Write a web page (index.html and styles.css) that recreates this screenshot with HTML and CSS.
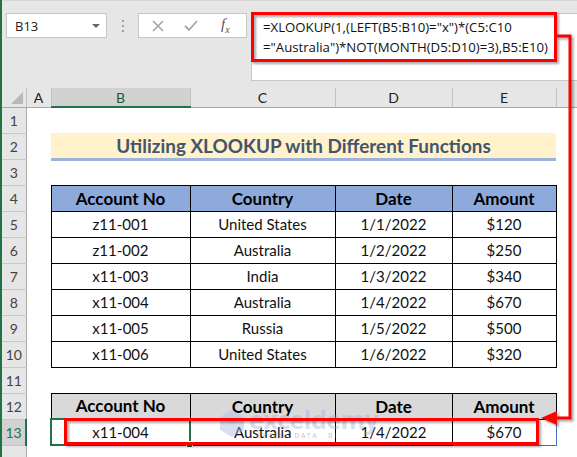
FILE: index.html
```html
<!DOCTYPE html>
<html lang="en">
<head>
    <meta charset="UTF-8">
    <title>Utilizing XLOOKUP with Different Functions</title>
    <link rel="stylesheet" href="styles.css">
</head>
<body>
    <div class="app">
        <div class="formula-bar">
            <div class="name-box">
                <span>B13</span>
                <span class="caret"></span>
            </div>
            <div class="grip"><i></i><i></i><i></i></div>
            <div class="fx-buttons">
                <svg class="btn-cancel" width="14" height="14" viewBox="0 0 14 14"><path d="M2 2 L12 12 M12 2 L2 12" stroke="#a6a6a6" stroke-width="1.6" fill="none"/></svg>
                <svg class="btn-enter" width="16" height="14" viewBox="0 0 16 14"><path d="M2 7 L6 11 L14 2" stroke="#a6a6a6" stroke-width="1.8" fill="none"/></svg>
                <span class="fx">f<sub>x</sub></span>
            </div>
            <div class="formula-input">
                <div class="formula-text">=XLOOKUP(1,(LEFT(B5:B10)="x")*(C5:C10<br>="Australia")*NOT(MONTH(D5:D10)=3),B5:E10)</div>
            </div>
        </div>

        <table class="sheet">
            <colgroup>
                <col class="w-row">
                <col class="w-a">
                <col class="w-b">
                <col class="w-c">
                <col class="w-d">
                <col class="w-e">
                <col>
            </colgroup>
            <tr class="col-heads">
                <th class="corner"><span class="corner-tri"></span></th>
                <th>A</th>
                <th class="active">B</th>
                <th>C</th>
                <th>D</th>
                <th>E</th>
                <th class="last"></th>
            </tr>
            <tr><td class="rh">1</td><td></td><td></td><td></td><td></td><td></td><td></td></tr>
            <tr>
                <td class="rh">2</td><td></td>
                <td class="title" colspan="4">Utilizing XLOOKUP with Different Functions</td>
                <td></td>
            </tr>
            <tr><td class="rh">3</td><td></td><td></td><td></td><td></td><td></td><td></td></tr>
            <tr>
                <td class="rh">4</td><td></td>
                <td class="head blue">Account No</td>
                <td class="head blue">Country</td>
                <td class="head blue">Date</td>
                <td class="head blue">Amount</td>
                <td></td>
            </tr>
            <tr><td class="rh">5</td><td></td><td class="cell">z11-001</td><td class="cell">United States</td><td class="cell">1/1/2022</td><td class="cell">$120</td><td></td></tr>
            <tr><td class="rh">6</td><td></td><td class="cell">z11-002</td><td class="cell">Australia</td><td class="cell">1/2/2022</td><td class="cell">$250</td><td></td></tr>
            <tr><td class="rh">7</td><td></td><td class="cell">x11-003</td><td class="cell">India</td><td class="cell">1/3/2022</td><td class="cell">$340</td><td></td></tr>
            <tr><td class="rh">8</td><td></td><td class="cell">x11-004</td><td class="cell">Australia</td><td class="cell">1/4/2022</td><td class="cell">$670</td><td></td></tr>
            <tr><td class="rh">9</td><td></td><td class="cell">x11-005</td><td class="cell">Russia</td><td class="cell">1/5/2022</td><td class="cell">$500</td><td></td></tr>
            <tr><td class="rh">10</td><td></td><td class="cell">x11-006</td><td class="cell">United States</td><td class="cell">1/6/2022</td><td class="cell">$320</td><td></td></tr>
            <tr><td class="rh">11</td><td></td><td></td><td></td><td></td><td></td><td></td></tr>
            <tr>
                <td class="rh">12</td><td></td>
                <td class="head gray">Account No</td>
                <td class="head gray">Country</td>
                <td class="head gray">Date</td>
                <td class="head gray">Amount</td>
                <td></td>
            </tr>
            <tr>
                <td class="rh active">13</td><td></td>
                <td class="cell selected">x11-004<span class="fill-handle"></span></td>
                <td class="cell">Australia</td>
                <td class="cell">1/4/2022</td>
                <td class="cell result-end">$670</td>
                <td></td>
            </tr>
            <tr><td class="rh"></td><td></td><td></td><td></td><td></td><td></td><td></td></tr>
        </table>

        <div class="watermark">
            <svg width="30" height="30" viewBox="0 0 30 30">
                <path d="M15 2 L27 9 L27 22 L15 29 L3 22 L3 9 Z" fill="#a9b8df" opacity="0.45"/>
                <path d="M15 2 L27 9 L15 16 L3 9 Z" fill="#c5d0ec" opacity="0.5"/>
            </svg>
            <div class="wm-text">
                <span class="wm-name">exceldemy</span>
                <span class="wm-sub">EXCEL · DATA · BI</span>
            </div>
        </div>

        <svg class="callout" width="577" height="457" viewBox="0 0 577 457">
            <g fill="none" stroke="#ff0000" stroke-width="3">
                <rect x="252.5" y="13.5" width="303" height="47"/>
                <path d="M557 36 H570 V418 H554"/>
                <rect x="65.5" y="419.5" width="472" height="24"/>
            </g>
            <polygon points="541,418 557,411 557,425" fill="#ff0000"/>
        </svg>
    </div>
</body>
</html>
```

FILE: styles.css
```css
body {
    margin: 0;
    padding: 0;
    background-color: #ffffff;
    font-family: Lato, "Liberation Sans", sans-serif;
}

.app {
    position: relative;
    width: 577px;
    height: 457px;
    overflow: hidden;
    border-left: 2px solid #217346;
    box-sizing: border-box;
}

/* formula bar */

.formula-bar {
    display: flex;
    align-items: flex-start;
    height: 88px;
    padding-top: 12px;
    box-sizing: border-box;
    background-color: #e6e6e6;
    border-top: 1px solid #d6d6d6;
}

.name-box {
    display: flex;
    align-items: center;
    justify-content: space-between;
    width: 101px;
    height: 25px;
    margin-left: 4px;
    padding: 0 6px 0 8px;
    box-sizing: border-box;
    background-color: #ffffff;
    border: 1px solid #c6c6c6;
    font-family: "Open Sans", sans-serif;
    font-size: 13px;
    color: #222;
}

.caret {
    width: 0;
    height: 0;
    border-left: 4px solid transparent;
    border-right: 4px solid transparent;
    border-top: 4px solid #666;
}

.grip {
    display: flex;
    flex-direction: column;
    gap: 3px;
    width: 31px;
    padding-top: 7px;
    align-items: center;
}

.grip i {
    width: 2px;
    height: 2px;
    background-color: #a0a0a0;
}

.fx-buttons {
    display: flex;
    align-items: center;
    width: 109px;
    height: 25px;
    padding-left: 12px;
    box-sizing: border-box;
    background-color: #ffffff;
    border: 1px solid #c6c6c6;
}

.btn-enter {
    margin-left: 18px;
}

.fx {
    margin-left: 22px;
    font-family: "Liberation Serif", serif;
    font-style: italic;
    font-size: 15px;
    color: #555;
}

.fx sub {
    font-size: 10px;
}

.formula-input {
    flex: 1;
    height: 66px;
    margin-left: 4px;
    background-color: #ffffff;
    border: 1px solid #c6c6c6;
    border-right: none;
}

.formula-text {
    padding: 3px 0 0 11px;
    font-family: "Open Sans", sans-serif;
    font-size: 13.2px;
    line-height: 20px;
    color: #111;
    white-space: nowrap;
}

/* sheet */

.sheet {
    width: 575px;
    table-layout: fixed;
    border-collapse: collapse;
    font-family: Lato, "Liberation Sans", sans-serif;
}

.w-row { width: 24px; }
.w-a { width: 25px; }
.w-b { width: 139px; }
.w-c { width: 145px; }
.w-d { width: 117px; }
.w-e { width: 104px; }

.sheet td {
    height: 26px;
    padding: 0;
    text-align: center;
    white-space: nowrap;
    box-sizing: border-box;
}

.col-heads th {
    height: 19px;
    padding: 0;
    background-color: #e6e6e6;
    border-right: 1px solid #c0c0c0;
    border-bottom: 1px solid #aaaaaa;
    font-weight: normal;
    font-size: 14px;
    color: #222;
    box-sizing: border-box;
}

.col-heads th.active {
    background-color: #d2d2d2;
    border-bottom: 2px solid #217346;
    color: #1d5a35;
}

.col-heads th.last {
    border-right: none;
}

.corner {
    position: relative;
}

.corner-tri {
    position: absolute;
    right: 3px;
    bottom: 3px;
    width: 0;
    height: 0;
    border-left: 12px solid transparent;
    border-bottom: 12px solid #b8b8b8;
}

.rh {
    background-color: #e6e6e6;
    border-right: 1px solid #aaaaaa;
    border-bottom: 1px solid #c8c8c8;
    font-size: 14px;
    color: #444;
}

.rh.active {
    background-color: #d2d2d2;
    border-right: 2px solid #217346;
    color: #217346;
}

.title {
    background-color: #fff2cc;
    border-bottom: 3px solid #9db3de;
    font-weight: bold;
    font-size: 18.9px;
    color: #44546a;
}

.head {
    border: 1px solid #000;
    font-weight: bold;
    font-size: 17px;
    color: #000;
}

.head.blue {
    background-color: #8eaadb;
}

.head.gray {
    background-color: #d9d9d9;
}

.cell {
    border: 1px solid #000;
    font-size: 15px;
    color: #111;
}

.cell.selected {
    position: relative;
    border: 2px solid #217346;
}

.fill-handle {
    position: absolute;
    right: -4px;
    bottom: -4px;
    width: 5px;
    height: 5px;
    background-color: #217346;
    border: 1px solid #ffffff;
}

.cell.result-end {
    border-right: 1px solid #4472c4;
    border-bottom: 1px solid #4472c4;
}

/* watermark */

.watermark {
    position: absolute;
    left: 215px;
    top: 407px;
    display: flex;
    align-items: center;
    gap: 2px;
    pointer-events: none;
}

.wm-text {
    display: flex;
    flex-direction: column;
    line-height: 1;
}

.wm-name {
    font-family: "Open Sans", sans-serif;
    font-weight: bold;
    font-size: 25px;
    letter-spacing: -0.5px;
    color: rgba(150, 170, 220, 0.4);
}

.wm-sub {
    padding-left: 8px;
    font-family: "Open Sans", sans-serif;
    font-size: 7px;
    letter-spacing: 1.5px;
    color: rgba(140, 140, 140, 0.5);
}

/* annotation */

.callout {
    position: absolute;
    left: -2px;
    top: 0;
    pointer-events: none;
    filter: drop-shadow(2px 2px 1px rgba(0, 0, 0, 0.35));
}
```
